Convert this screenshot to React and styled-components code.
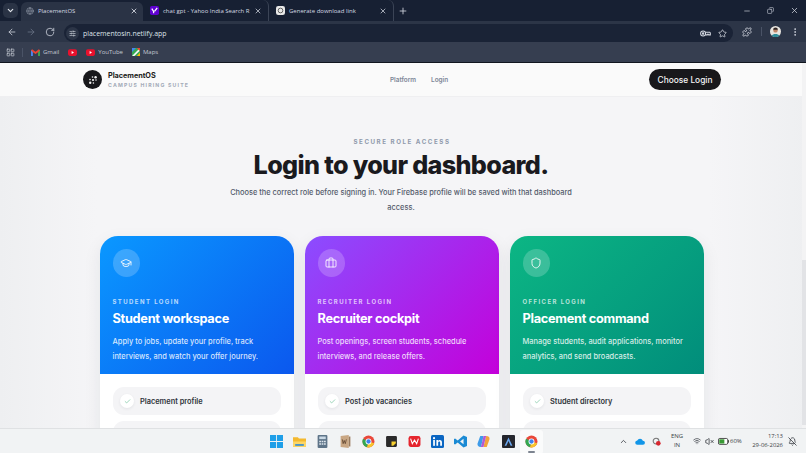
import React from "react";
import styled, { createGlobalStyle } from "styled-components";
import {
  ArrowLeft, ArrowRight, Briefcase, ChevronDown, ChevronUp, Check, EllipsisVertical,
  GraduationCap, Globe, LayoutGrid, Minus, Plus, Puzzle, RotateCw, Shield, SlidersHorizontal,
  Star, VolumeX, Wifi, X, BellOff, Copy,
} from "lucide-react";

const Global = createGlobalStyle`
  html, body { margin: 0; padding: 0; background: #f4f4f6; }
  #root { width: 806px; height: 453px; overflow: hidden; }
  * { box-sizing: border-box; }
`;

const Screen = styled.div`
  width: 806px; height: 453px; display: flex; flex-direction: column; overflow: hidden;
  font-family: Inter, "Liberation Sans", sans-serif;
`;

/* Browser chrome */
const TabStrip = styled.div`
  height: 21px; flex: none; display: flex; align-items: flex-end; background: #172033; padding-left: 3px;
  color: #d5d9e2; font-family: "Open Sans", "Noto Sans", sans-serif; font-size: 6px;
`;
const TabMenu = styled.div`
  width: 15px; height: 15px; margin: 0 3px 3px 0; border-radius: 5px; background: #2a3345;
  display: flex; align-items: center; justify-content: center; color: #e5e8ee;
`;
const Tab = styled.div`
  width: ${(p) => p.$w}px; height: ${(p) => (p.$active ? 19 : 21)}px; display: flex; align-items: center; gap: 4px;
  padding: ${(p) => (p.$active ? "0 5px 2px 5px" : "0 6px 0 7px")};
  background: ${(p) => (p.$active ? "#2a3345" : "transparent")};
  border-radius: 6px 6px 0 0;
  border-right: ${(p) => (p.$sep ? "1px solid #3b4456" : "none")};
`;
const TabTitle = styled.span`
  flex: 1; min-width: 0; white-space: nowrap;
`;
const NewTab = styled.div`
  margin: 0 0 3px 1.5px; width: 15px; height: 15px; display: flex; align-items: center; justify-content: center;
`;
const WindowControls = styled.div`
  margin-left: auto; height: 21px; display: flex; align-items: center; gap: 16px; padding-right: 7.5px; color: #cfd3dc;
`;
const Toolbar = styled.div`
  height: 21px; flex: none; display: flex; align-items: center; background: #2c3547; color: #c5cad5;
  padding: 0 0 0 7px;
`;
const NavIcons = styled.div`
  display: flex; align-items: center; gap: 9px; width: 57px; flex: none;
  & > svg:nth-child(2) { color: #687184; }
`;
const Address = styled.div`
  width: 669px; flex: none; height: 18px; margin-top: 3px; border-radius: 9px; background: #1a2336; display: flex; align-items: center;
  padding: 0 6px 0 2px; gap: 4px;
  font-family: "Open Sans", "Noto Sans", sans-serif; font-size: 6.95px; color: #dfe3ea;
`;
const SiteChip = styled.div`
  width: 13px; height: 13px; border-radius: 50%; background: #2c3547; display: flex; align-items: center; justify-content: center;
`;
const AddressEnd = styled.div`
  margin-left: auto; display: flex; gap: 7px; align-items: center; color: #d5d9e2;
`;
const ToolEnd = styled.div`
  flex: 1; display: flex; align-items: center; padding-left: 9px; gap: 8.5px; color: #d5d9e2;
`;
const VSep = styled.div`
  width: 1px; height: 9px; background: #4a5366; margin: 0 ${(p) => p.$r ?? 0}px 0 ${(p) => p.$l ?? 0}px;
`;
const Bookmarks = styled.div`
  height: 21px; flex: none; display: flex; align-items: center; padding-left: 6px; color: #c3c8d2; background: #363e50;
  font-family: "Open Sans", "Noto Sans", sans-serif; font-size: 6px; border-bottom: 1px solid #11161f;
`;
const Bookmark = styled.div`
  display: flex; align-items: center; gap: 3px; margin-right: 9px;
`;

/* Page */
const Viewport = styled.div`
  flex: 1; min-height: 0; display: flex; overflow: hidden; background: linear-gradient(90deg,#eeeff1 0,#f5f5f7 12%,#f5f5f7 88%,#eeeff1 100%);
`;
const Page = styled.div`
  flex: 1; min-width: 0; display: flex; flex-direction: column;
`;
const Scrollbar = styled.div`
  width: 4px; flex: none; background: #f3f3f4; display: flex; flex-direction: column; padding-top: 197px;
  &::before { content: ""; height: 165px; background: #e2e3e6; }
`;
const Nav = styled.header`
  height: 34px; flex: none; background: #fafafa; border-bottom: 1px solid #efeff1; display: flex; align-items: center; padding: 0 81px 0 83px;
`;
const Brand = styled.div`
  display: flex; align-items: center; gap: 6px; width: 307px;
`;
const Logo = styled.div`
  width: 19px; height: 19px; border-radius: 50%; background: #18181b; display: flex; align-items: center; justify-content: center;
`;
const BrandText = styled.div`
  display: flex; flex-direction: column; gap: 1px;
`;
const BrandName = styled.div`
  font-size: 7.3px; font-weight: 700; color: #1c1c20; line-height: 10px; letter-spacing: -0.05px;
`;
const BrandSub = styled.div`
  font-size: 5.2px; font-weight: 700; color: #a3abb8; letter-spacing: 1.18px; line-height: 7px; white-space: nowrap;
`;
const NavLinks = styled.nav`
  display: flex; gap: 15px; font-size: 6.4px; font-weight: 600; color: #7d8798;
`;
const Cta = styled.button`
  margin-left: auto; width: 72px; height: 21px; border: 0; border-radius: 11px; background: #18181b; color: #f6f6f6;
  font: 500 8.35px Inter, sans-serif; padding: 0;
`;
const Hero = styled.section`
  display: flex; flex-direction: column; align-items: center; padding-top: 41px;
`;
const Eyebrow = styled.div`
  font-size: 6.2px; font-weight: 700; letter-spacing: 1.55px; color: #8f99ab; line-height: 8px; padding-left: 2px;
`;
const Title = styled.h1`
  margin: 1px 0 0; font-size: 25.2px; font-weight: 800; line-height: 36px; letter-spacing: -0.66px; color: #1a1a1e;
`;
const Lede = styled.p`
  margin: 2px 0 0; width: 350px; font-size: 7.4px; font-weight: 500; line-height: 15px; text-align: center; color: #535b6b;
`;
const Cards = styled.div`
  display: grid; grid-template-columns: repeat(3, 193.5px); gap: 11.5px; padding: 21px 0 0 100px;
`;
const Card = styled.article`
  border-radius: 18px 18px 0 0; background: #fff; overflow: hidden; box-shadow: 0 6px 18px rgba(30,35,50,.08);
`;
const CardHead = styled.div`
  height: 138px; padding: 13px 12.5px 0; color: #fff;
  background: linear-gradient(135deg, ${(p) => p.$from}, ${(p) => p.$to});
`;
const IconDisc = styled.div`
  width: 27.5px; height: 27.5px; border-radius: 50%; background: rgba(255,255,255,.2); display: flex; align-items: center; justify-content: center;
`;
const Role = styled.div`
  margin-top: 21px; font-size: 6px; font-weight: 700; letter-spacing: 1.42px; line-height: 8px; color: rgba(255,255,255,.72);
`;
const CardTitle = styled.h2`
  margin: 4px 0 0; font-size: 12.75px; font-weight: 700; line-height: 17px; letter-spacing: -0.28px;
`;
const CardText = styled.p`
  margin: 7.5px 0 0; font-size: 7.46px; font-weight: 500; line-height: 15px; color: rgba(255,255,255,.84); white-space: nowrap;
`;
const CardBody = styled.div`
  padding: 12.5px 12.5px 0; display: flex; flex-direction: column; gap: 6px;
`;
const Feature = styled.div`
  height: 28px; flex: none; border-radius: 11px; background: #f4f4f6; display: flex; align-items: center; gap: 6px; padding: 1px 0 0 7.5px;
  font-size: 7.4px; font-weight: 600; color: #30343c;
`;
const CheckDisc = styled.div`
  width: 14px; height: 14px; border-radius: 50%; background: #fff; display: flex; align-items: center; justify-content: center; color: #58b98a;
  box-shadow: 0 1px 3px rgba(30,35,50,.08);
`;

/* Taskbar */
const Taskbar = styled.footer`
  height: 25px; flex: none; display: flex; align-items: center; background: #f1f3f4; border-top: 1px solid #dfe1e3; padding: 0 0 0 269.5px;
  font-family: "Open Sans", "Noto Sans", sans-serif; color: #2b2f36;
`;
const Apps = styled.div`
  display: flex; gap: 10px; align-items: center;
`;
const AppIcon = styled.svg`
  width: 13px; height: 13px; flex: none; display: block;
`;
const ActiveApp = styled.div`
  position: relative; width: 13px; height: 13px;
  &::before { content: ""; position: absolute; inset: -5px -5px -6px; background: rgba(255,255,255,.65); border-radius: 3px; }
  &::after { content: ""; position: absolute; left: 3px; right: 3px; bottom: -5px; height: 1.5px; border-radius: 1px; background: #7d8490; }
  & > svg { position: relative; z-index: 1; display: block; }
`;
const Tray = styled.div`
  margin-left: auto; display: flex; align-items: center; padding-right: 9px;
`;
const TrayGap = styled.span`
  display: flex; align-items: center; margin-left: ${(p) => p.$m}px;
`;
const Lang = styled.div`
  font-size: 6px; line-height: 9px; text-align: center; margin-left: 10px; color: #3a3e45; width: 12px;
`;
const Battery = styled.span`
  font-size: 6px; margin-left: 1px; color: #3a3e45; width: 12px; white-space: nowrap;
`;
const Clock = styled.div`
  font-size: 5.9px; line-height: 9px; text-align: right; margin-left: 9px; color: #3a3e45; width: 32px; white-space: nowrap;
`;

const Sz = { strokeWidth: 2 };

const ChromeLogo = () => (
  <svg width="13" height="13" viewBox="0 0 24 24">
    <circle cx="12" cy="12" r="11" fill="#e9483a" />
    <path d="M12 12 L22.5 15 A11 11 0 0 1 9 22.6Z" fill="#f7c52b" />
    <path d="M12 12 L9 22.6 A11 11 0 0 1 2 7Z" fill="#33a853" />
    <circle cx="12" cy="12" r="5.4" fill="#fff" />
    <circle cx="12" cy="12" r="4" fill="#3c82f0" />
  </svg>
);

const cards = [
  {
    from: "#0a98ff", to: "#0b58ee", icon: GraduationCap, role: "STUDENT LOGIN", title: "Student workspace",
    text: ["Apply to jobs, update your profile, track", "interviews, and watch your offer journey."], first: "Placement profile",
  },
  {
    from: "#8b4dff", to: "#c400da", icon: Briefcase, role: "RECRUITER LOGIN", title: "Recruiter cockpit",
    text: ["Post openings, screen students, schedule", "interviews, and release offers."], first: "Post job vacancies",
  },
  {
    from: "#0cb684", to: "#018d7b", icon: Shield, role: "OFFICER LOGIN", title: "Placement command",
    text: ["Manage students, audit applications, monitor", "analytics, and send broadcasts."], first: "Student directory",
  },
];

export default function App() {
  return (
    <Screen>
      <Global />
      <TabStrip>
        <TabMenu><ChevronDown size={9} strokeWidth={3} /></TabMenu>
        <Tab $w={122} $active>
          <Globe size={8} color="#8c94a3" />
          <TabTitle>PlacementOS</TabTitle>
          <X size={8} strokeWidth={2.6} />
        </Tab>
        <Tab $w={126} $sep>
          <svg width="9" height="9" viewBox="0 0 10 10"><rect width="10" height="10" rx="2" fill="#5f01d1" /><path d="M2 3l2 3v2M8 2L5 6" stroke="#fff" strokeWidth="1.4" fill="none" /></svg>
          <TabTitle>chat gpt - Yahoo India Search R</TabTitle>
          <X size={8} strokeWidth={2.2} />
        </Tab>
        <Tab $w={125} $sep>
          <svg width="9" height="9" viewBox="0 0 10 10"><rect width="10" height="10" rx="2.5" fill="#e8e8e8" /><circle cx="5" cy="5" r="2.6" fill="none" stroke="#555" strokeWidth="1" /></svg>
          <TabTitle>Generate download link</TabTitle>
          <X size={8} strokeWidth={2.2} />
        </Tab>
        <NewTab><Plus size={10} /></NewTab>
        <WindowControls>
          <Minus size={8} />
          <Copy size={7} style={{ transform: "scaleX(-1)" }} />
          <X size={9} />
        </WindowControls>
      </TabStrip>

      <Toolbar>
        <NavIcons>
          <ArrowLeft size={10} {...Sz} />
          <ArrowRight size={10} {...Sz} />
          <RotateCw size={10} {...Sz} />
        </NavIcons>
        <Address>
          <SiteChip><SlidersHorizontal size={7} /></SiteChip>
          placementosin.netlify.app
          <AddressEnd>
            <svg width="11" height="7" viewBox="0 0 16 10" fill="none" stroke="currentColor" strokeWidth="1.5">
              <circle cx="4.5" cy="5" r="3.6" /><circle cx="4.5" cy="5" r="1" fill="currentColor" />
              <path d="M8 3.2h6a1.4 1.4 0 0 1 1 1.2v2.6h-2.4l-1-1.2-1 1.2H8" />
            </svg>
            <Star size={9} />
          </AddressEnd>
        </Address>
        <ToolEnd>
          <Puzzle size={10} />
          <VSep />
          <svg width="11" height="11" viewBox="0 0 12 12">
            <circle cx="6" cy="6" r="6" fill="#e9e6e0" />
            <circle cx="6" cy="4.8" r="2.4" fill="#c08466" />
            <path d="M3.4 4.2a2.6 2.6 0 0 1 5.2 0z" fill="#2d2422" />
            <path d="M1.8 10.5C3 8 9 8 10.2 10.5A6 6 0 0 1 1.8 10.5z" fill="#2f8c99" />
          </svg>
          <EllipsisVertical size={10} />
        </ToolEnd>
      </Toolbar>

      <Bookmarks>
        <LayoutGrid size={9} />
        <VSep $l={7} $r={8} />
        <Bookmark>
          <svg width="9" height="7" viewBox="0 0 12 9">
            <path d="M0 1.5V9h2.5V4L6 6.5 9.5 4v5H12V1.5L10.5.3 6 3.6 1.5.3z" fill="#ea4335" />
            <path d="M0 1.5V9h2.5V4z" fill="#4285f4" /><path d="M9.5 4v5H12V1.5z" fill="#34a853" />
          </svg>
          Gmail
        </Bookmark>
        <Bookmark>
          <svg width="9" height="7" viewBox="0 0 12 9"><rect width="12" height="9" rx="2.4" fill="#e8112d" /><path d="M4.8 2.6v3.8L8 4.5z" fill="#fff" /></svg>
        </Bookmark>
        <Bookmark>
          <svg width="9" height="7" viewBox="0 0 12 9"><rect width="12" height="9" rx="2.4" fill="#e8112d" /><path d="M4.8 2.6v3.8L8 4.5z" fill="#fff" /></svg>
          YouTube
        </Bookmark>
        <Bookmark>
          <svg width="8" height="8" viewBox="0 0 10 10">
            <rect width="10" height="10" rx="1" fill="#35a853" /><path d="M0 10L10 0v3L3 10z" fill="#f8f9fa" />
            <path d="M0 0h5L0 5z" fill="#4285f4" /><path d="M6 0h4v4z" fill="#ea4335" /><path d="M6 10l4-4v4z" fill="#fbbc04" />
          </svg>
          Maps
        </Bookmark>
      </Bookmarks>

      <Viewport>
        <Page>
          <Nav>
            <Brand>
              <Logo>
                <svg width="10" height="10" viewBox="0 0 10 10" fill="#f2f2f2">
                  <circle cx="5" cy="5" r="1.1" /><circle cx="7.6" cy="2.2" r="1.2" /><circle cx="2.2" cy="7.8" r="1.2" />
                  <circle cx="4.5" cy="2" r=".8" /><circle cx="8" cy="5" r=".8" /><circle cx="2" cy="4.6" r=".8" /><circle cx="5.4" cy="8" r=".8" />
                </svg>
              </Logo>
              <BrandText>
                <BrandName>PlacementOS</BrandName>
                <BrandSub>CAMPUS HIRING SUITE</BrandSub>
              </BrandText>
            </Brand>
            <NavLinks>
              <span>Platform</span>
              <span>Login</span>
            </NavLinks>
            <Cta>Choose Login</Cta>
          </Nav>
          <Hero>
            <Eyebrow>SECURE ROLE ACCESS</Eyebrow>
            <Title>Login to your dashboard.</Title>
            <Lede>Choose the correct role before signing in. Your Firebase profile will be saved with that dashboard access.</Lede>
          </Hero>
          <Cards>
            {cards.map((c) => {
              const Icon = c.icon;
              return (
                <Card key={c.role}>
                  <CardHead $from={c.from} $to={c.to}>
                    <IconDisc><Icon size={12} strokeWidth={1.7} /></IconDisc>
                    <Role>{c.role}</Role>
                    <CardTitle>{c.title}</CardTitle>
                    <CardText>{c.text[0]}<br />{c.text[1]}</CardText>
                  </CardHead>
                  <CardBody>
                    <Feature>
                      <CheckDisc><Check size={7} strokeWidth={2} /></CheckDisc>
                      {c.first}
                    </Feature>
                    <Feature />
                  </CardBody>
                </Card>
              );
            })}
          </Cards>
        </Page>
        <Scrollbar />
      </Viewport>

      <Taskbar>
        <Apps>
          <AppIcon viewBox="0 0 12 12">
            <path d="M0 0h5.6v5.6H0zM6.4 0H12v5.6H6.4zM0 6.4h5.6V12H0zM6.4 6.4H12V12H6.4z" fill="#1f9fe8" />
          </AppIcon>
          <AppIcon viewBox="0 0 12 12">
            <path d="M0 2h4.5l1 1.2H12V11H0z" fill="#f4b92f" /><path d="M0 6h12v5H0z" fill="#fcd667" /><rect x="2" y="8.4" width="8" height="1.6" fill="#3c90d0" />
          </AppIcon>
          <AppIcon viewBox="0 0 12 12">
            <rect x="1.5" width="9" height="12" rx="1" fill="#5e7488" /><rect x="3" y="1.4" width="6" height="2.4" fill="#c9d8e4" />
            <path d="M3 5.4h1.6v1.4H3zM5.2 5.4h1.6v1.4H5.2zM7.4 5.4H9v1.4H7.4zM3 7.6h1.6V9H3zM5.2 7.6h1.6V9H5.2zM7.4 7.6H9V9H7.4z" fill="#dfe7ee" />
          </AppIcon>
          <AppIcon viewBox="0 0 12 12">
            <path d="M1.5 1L9 0v12l-7.5-1z" fill="#c9a784" /><path d="M9 1.4h1.5v9.2H9z" fill="#9b7c5f" />
            <path d="M3 4l.8 4 1-3 1 3L6.8 4" stroke="#5a3f2a" strokeWidth=".7" fill="none" />
          </AppIcon>
          <ChromeLogo />
          <AppIcon viewBox="0 0 12 12">
            <rect x="1" y="1" width="10" height="10" rx="1" fill="#2a2a2a" /><path d="M6 6h4v1.6L7.6 10H6z" fill="#f6d02f" />
          </AppIcon>
          <AppIcon viewBox="0 0 12 12">
            <rect x=".5" y="1" width="11" height="10" rx="2" fill="#e5262e" />
            <path d="M2.4 3.4L4 8l2-3.4L8 8l1.6-4.6" stroke="#fff" strokeWidth="1" fill="none" />
          </AppIcon>
          <AppIcon viewBox="0 0 12 12">
            <rect width="12" height="12" rx="1.4" fill="#0a66c2" />
            <rect x="2" y="4.6" width="1.6" height="5.4" fill="#fff" /><circle cx="2.8" cy="2.9" r="1" fill="#fff" />
            <path d="M5 4.6h1.5v.8c.8-1.3 3.6-1.3 3.6 1.3V10H8.5V7.2c0-1.5-1.9-1.4-1.9 0V10H5z" fill="#fff" />
          </AppIcon>
          <AppIcon viewBox="0 0 12 12">
            <path d="M8.8.4L12 1.8v8.4l-3.2 1.4L3.4 7 1 8.8 0 8.2V3.8l1-.6L3.4 5zM8.8 3.4L5.6 6l3.2 2.6z" fill="#1a8ad4" />
          </AppIcon>
          <AppIcon viewBox="0 0 12 12">
            <path d="M3 1h3L4.5 7.5 3.5 11C1 11 0 9.5.6 7.6z" fill="#3d9be9" /><path d="M9 11H6l1.5-6.5L8.5 1c2.5 0 3.5 1.5 2.9 3.4z" fill="#f2a33a" />
            <path d="M6 1l-1.5 6.5L3.5 11 6 11l1.5-6.5L8.5 1z" fill="#b45ad1" />
          </AppIcon>
          <AppIcon viewBox="0 0 12 12" style={{ marginLeft: 2 }}>
            <rect width="12" height="12" rx="1" fill="#23252c" /><path d="M6 2.4L9.6 10H8L6 5.6 4 10H2.4z" fill="#6aa7ef" />
          </AppIcon>
          <ActiveApp><ChromeLogo /></ActiveApp>
        </Apps>
        <Tray>
          <ChevronUp size={9} strokeWidth={2} />
          <TrayGap $m={7}>
            <svg width="10" height="7" viewBox="0 0 12 8"><path d="M3 8a2.6 2.6 0 0 1-.3-5.2A3.6 3.6 0 0 1 9.4 3 2.5 2.5 0 0 1 9.5 8z" fill="#1296e8" /></svg>
          </TrayGap>
          <TrayGap $m={7}>
            <svg width="9" height="9" viewBox="0 0 10 10"><circle cx="4.5" cy="4.5" r="3.2" fill="none" stroke="#777" strokeWidth="1.2" /><circle cx="7" cy="7" r="2.6" fill="#d8262e" /></svg>
          </TrayGap>
          <Lang>ENG<br />IN</Lang>
          <TrayGap $m={10}><Wifi size={8} /></TrayGap>
          <TrayGap $m={4}><VolumeX size={9} /></TrayGap>
          <TrayGap $m={4}>
            <svg width="11" height="8" viewBox="0 0 13 9"><rect x=".5" y="1.5" width="11" height="7" rx="1.6" fill="#fff" stroke="#333" /><rect x="1.5" y="2.5" width="6" height="5" fill="#3a9a35" /><rect x="12" y="3.5" width="1" height="3" fill="#333" /></svg>
          </TrayGap>
          <Battery>60%</Battery>
          <Clock>17:13<br />29-06-2026</Clock>
          <TrayGap $m={5}><BellOff size={9} /></TrayGap>
        </Tray>
      </Taskbar>
    </Screen>
  );
}
